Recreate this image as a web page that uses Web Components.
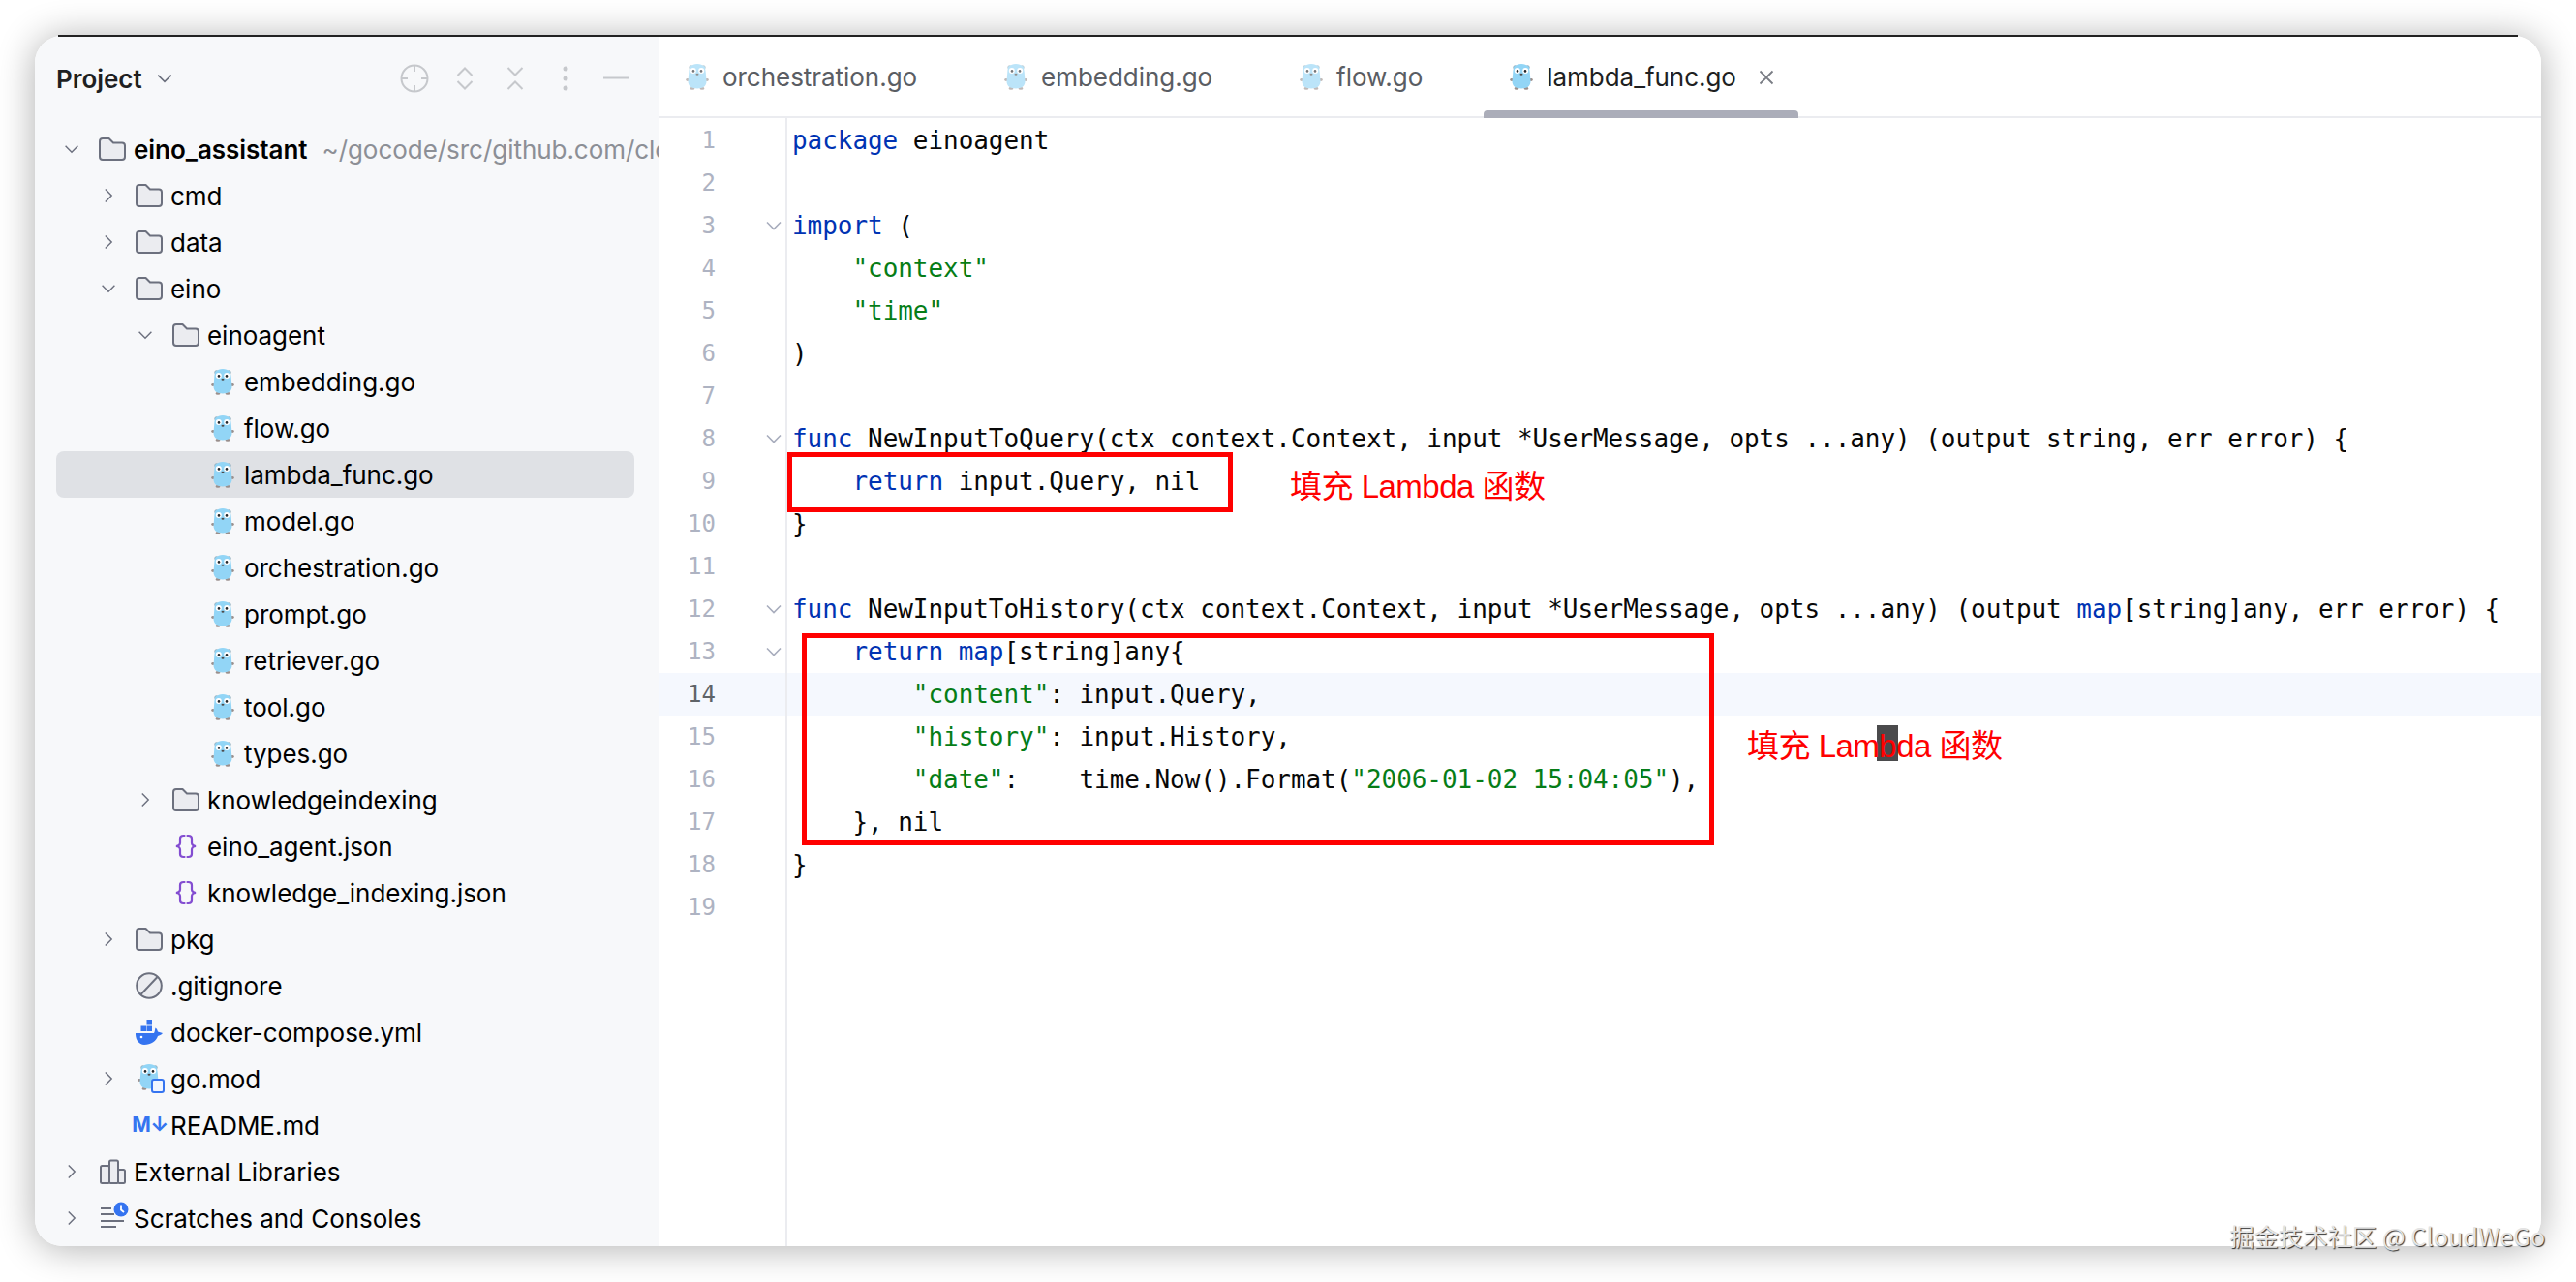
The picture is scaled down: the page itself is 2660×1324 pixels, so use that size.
<!DOCTYPE html>
<html lang="zh">
<head>
<meta charset="utf-8">
<title>lambda_func.go</title>
<style>
  html, body { margin: 0; background: #fff; }
  body { font-family: Inter, "Noto Sans CJK SC", sans-serif; }
</style>
</head>
<body>
<ide-window>
  <project-panel slot="side">
    <tree-row level="0" arrow="open" icon="folder"><b>eino_assistant</b><i>~/gocode/src/github.com/clo</i></tree-row>
    <tree-row level="1" arrow="closed" icon="folder">cmd</tree-row>
    <tree-row level="1" arrow="closed" icon="folder">data</tree-row>
    <tree-row level="1" arrow="open" icon="folder">eino</tree-row>
    <tree-row level="2" arrow="open" icon="folder">einoagent</tree-row>
    <tree-row level="3" icon="go">embedding.go</tree-row>
    <tree-row level="3" icon="go">flow.go</tree-row>
    <tree-row level="3" icon="go" selected>lambda_func.go</tree-row>
    <tree-row level="3" icon="go">model.go</tree-row>
    <tree-row level="3" icon="go">orchestration.go</tree-row>
    <tree-row level="3" icon="go">prompt.go</tree-row>
    <tree-row level="3" icon="go">retriever.go</tree-row>
    <tree-row level="3" icon="go">tool.go</tree-row>
    <tree-row level="3" icon="go">types.go</tree-row>
    <tree-row level="2" arrow="closed" icon="folder">knowledgeindexing</tree-row>
    <tree-row level="2" icon="json">eino_agent.json</tree-row>
    <tree-row level="2" icon="json">knowledge_indexing.json</tree-row>
    <tree-row level="1" arrow="closed" icon="folder">pkg</tree-row>
    <tree-row level="1" icon="git">.gitignore</tree-row>
    <tree-row level="1" icon="docker">docker-compose.yml</tree-row>
    <tree-row level="1" arrow="closed" icon="gomod">go.mod</tree-row>
    <tree-row level="1" icon="md">README.md</tree-row>
    <tree-row level="0" arrow="closed" icon="lib">External Libraries</tree-row>
    <tree-row level="0" arrow="closed" icon="scratch">Scratches and Consoles</tree-row>
  </project-panel>

  <editor-pane slot="main">
    <editor-tab slot="tabs">orchestration.go</editor-tab>
    <editor-tab slot="tabs">embedding.go</editor-tab>
    <editor-tab slot="tabs">flow.go</editor-tab>
    <editor-tab slot="tabs" active>lambda_func.go</editor-tab>

    <code-line n="1"><span class="k">package</span> einoagent</code-line>
    <code-line n="2"></code-line>
    <code-line n="3" fold><span class="k">import</span> (</code-line>
    <code-line n="4">    <span class="s">"context"</span></code-line>
    <code-line n="5">    <span class="s">"time"</span></code-line>
    <code-line n="6">)</code-line>
    <code-line n="7"></code-line>
    <code-line n="8" fold><span class="k">func</span> NewInputToQuery(ctx context.Context, input *UserMessage, opts ...any) (output string, err error) {</code-line>
    <code-line n="9">    <span class="k">return</span> input.Query, nil</code-line>
    <code-line n="10">}</code-line>
    <code-line n="11"></code-line>
    <code-line n="12" fold><span class="k">func</span> NewInputToHistory(ctx context.Context, input *UserMessage, opts ...any) (output <span class="k">map</span>[string]any, err error) {</code-line>
    <code-line n="13" fold>    <span class="k">return</span> <span class="k">map</span>[string]any{</code-line>
    <code-line n="14" current>        <span class="s">"content"</span>: input.Query,</code-line>
    <code-line n="15">        <span class="s">"history"</span>: input.History,</code-line>
    <code-line n="16">        <span class="s">"date"</span>:    time.Now().Format(<span class="s">"2006-01-02 15:04:05"</span>),</code-line>
    <code-line n="17">    }, nil</code-line>
    <code-line n="18">}</code-line>
    <code-line n="19"></code-line>
  </editor-pane>

  <!-- hand drawn notes on top of the screenshot -->
  <red-box x="777" y="430" w="460" h="62"></red-box>
  <red-box x="792" y="617" w="942" h="219"></red-box>
  <red-note x="1296" y="463">填充 Lambda 函数</red-note>
  <text-cursor x="1902" y="712"></text-cursor>
  <red-note x="1768" y="731">填充 Lambda 函数</red-note>
</ide-window>
<water-mark>掘金技术社区 @ CloudWeGo</water-mark>

<script>
const GOPHER = `
  <svg width="24" height="28" viewBox="0 0 24 28">
    <ellipse cx="2" cy="17.5" rx="1.8" ry="1.4" fill="#9a8f8c"/>
    <ellipse cx="22" cy="17.5" rx="1.8" ry="1.4" fill="#9a8f8c"/>
    <ellipse cx="7" cy="26.4" rx="2.4" ry="1.4" fill="#9a8f8c"/>
    <ellipse cx="17" cy="26.4" rx="2.4" ry="1.4" fill="#9a8f8c"/>
    <circle cx="5.600" cy="4.600" r="2" fill="#8ccfef" stroke="#9aa8b0" stroke-width=".6"/>
    <circle cx="18.400" cy="4.600" r="2" fill="#8ccfef" stroke="#9aa8b0" stroke-width=".6"/>
    <path d="M12 1C18.500 1 20.500 4.600 20.700 9.500L21.500 19C21.500 24.200 17.500 26.400 12 26.400S2.500 24.200 2.500 19L3.300 9.500C3.500 4.600 5.500 1 12 1Z" fill="#92d5f6"/>
    <circle cx="7.800" cy="8" r="3" fill="#fff"/>
    <circle cx="16.200" cy="8" r="3" fill="#fff"/>
    <circle cx="8" cy="8.400" r="1.300" fill="#23272b"/>
    <circle cx="16" cy="8.400" r="1.300" fill="#23272b"/>
    <ellipse cx="12" cy="11.800" rx="1.500" ry="1" fill="#4d4a4a"/>
  </svg>`;

const ICONS = {
  go: GOPHER,
  folder: `<svg width="28" height="24" viewBox="0 0 28 24"><path d="M1 4a3 3 0 0 1 3-3h6.500l4.500 4.500h9a3 3 0 0 1 3 3V20a3 3 0 0 1-3 3H4a3 3 0 0 1-3-3Z" fill="#ebecf0" stroke="#6c707e" stroke-width="2" stroke-linejoin="round"/></svg>`,
  json: `<svg width="28" height="26" viewBox="0 0 28 26" fill="none" stroke="#834dd1" stroke-width="2.200" stroke-linecap="round"><path d="M12.500 2H11.500C9 2 8 3 8 5V9.500C8 11.500 7 12.500 4 13C7 13.500 8 14.500 8 16.500V21C8 23 9 24 11.500 24H12.500"/><path d="M15.500 2H16.500C19 2 20 3 20 5V9.500C20 11.500 21 12.500 24 13C21 13.500 20 14.500 20 16.500V21C20 23 19 24 16.500 24H15.500"/></svg>`,
  git: `<svg width="28" height="28" viewBox="0 0 28 28"><circle cx="14" cy="14" r="12.800" fill="#ebecf0" stroke="#6c707e" stroke-width="2"/><path d="M5.500 23L22.500 5" stroke="#6c707e" stroke-width="2"/></svg>`,
  docker: `<svg width="28" height="28" viewBox="0 0 28 28" fill="#3574f0"><rect x="11.500" y="1" width="5.500" height="5.500"/><rect x="5.500" y="7.500" width="5.500" height="5.500"/><rect x="11.500" y="7.500" width="5.500" height="5.500"/><path d="M0 15H19C20 13.500 20 11 20.500 9.500C22 10.500 22.700 12 23 13.500L28 15C26.500 17 24.500 17.500 23 18C21 23.500 16 27 9 27C3 27-.3 21 0 15Z"/><circle cx="6" cy="19" r="1.300" fill="#fff"/></svg>`,
  gomod: `<span style="position:relative;display:block;width:28px;height:28px;left:2px;top:-2px">${GOPHER}<span style="position:absolute;right:0;bottom:-3px;width:10px;height:11px;border:2px solid #3574f0;border-radius:3px;background:#f0f5ff"></span></span>`,
  md: `<span style="position:relative;left:1px;display:block;font:700 21px/28px Inter,sans-serif;color:#3574f0;white-space:nowrap;letter-spacing:-.5px">M↓</span>`,
  lib: `<svg width="28" height="26" viewBox="0 0 28 26" fill="#ebecf0" stroke="#6c707e" stroke-width="2" stroke-linejoin="round"><rect x="2" y="7" width="9" height="18" rx="1.500"/><rect x="11" y="1.500" width="9" height="23.500" rx="1.500"/><rect x="20" y="11" width="7" height="14" rx="1.500"/></svg>`,
  scratch: `<svg width="30" height="28" viewBox="0 0 30 28" stroke="#6c707e" stroke-width="2" style="overflow:visible"><path d="M3 4H14M3 10H17M3 17H27M3 23H19" fill="none"/><circle cx="24" cy="5" r="7.500" fill="#3574f0" stroke="none"/><path d="M24 .5V5.500L27 8" fill="none" stroke="#fff" stroke-width="1.800"/></svg>`
};

class FileIcon extends HTMLElement {
  connectedCallback() {
    const root = this.attachShadow({ mode: 'open' });
    root.innerHTML = `
      <style>
        :host { display: flex; align-items: center; justify-content: center; width: 28px; height: 28px; flex: none; }
        svg { display: block; flex: none; }
      </style>
      ${ICONS[this.getAttribute('type')] || ''}`;
  }
}

class ChevronIcon extends HTMLElement {
  connectedCallback() {
    const dir = this.getAttribute('dir');
    const color = this.getAttribute('color') || '#6c707e';
    const path = dir === 'open' ? 'M2 6L10 14L18 6' : 'M6 2L14 10L6 18';
    this.attachShadow({ mode: 'open' }).innerHTML = `
      <style>
        :host { display: block; width: 20px; height: 20px; flex: none; }
        svg { display: block; }
      </style>
      <svg width="20" height="20" viewBox="0 0 20 20" fill="none" stroke="${color}" stroke-width="1.800"><path d="${path}"/></svg>`;
  }
}

class IdeWindow extends HTMLElement {
  constructor() {
    super();
    this.attachShadow({ mode: 'open' }).innerHTML = `
      <style>
        :host { display: block; padding: 37px 36px; }
        #win {
          position: relative;
          display: flex;
          height: 1250px;
          border-radius: 28px;
          background: #fff;
          box-shadow: 0 2px 38px rgba(0,0,0,0.32);
        }
        #win::before {
          content: '';
          position: absolute;
          top: -1px;
          left: 24px;
          right: 24px;
          height: 2px;
          background: #222;
        }
        #side { display: block; flex: none; width: 645px; overflow: hidden; border-radius: 28px 0 0 28px; }
        #main { display: block; flex: 1; min-width: 0; overflow: hidden; border-radius: 0 28px 28px 0; }
      </style>
      <div id="win">
        <div id="side"><slot name="side"></slot></div>
        <div id="main"><slot name="main"></slot></div>
        <slot></slot>
      </div>`;
  }
}

class ProjectPanel extends HTMLElement {
  constructor() {
    super();
    this.attachShadow({ mode: 'open' }).innerHTML = `
      <style>
        :host {
          display: block;
          box-sizing: border-box;
          height: 1250px;
          background: #f7f8fa;
          border-right: 1px solid #ebecf0;
          font: 26px Inter, sans-serif;
          letter-spacing: -0.04px;
          color: #000;
        }
        header { display: flex; align-items: center; height: 88px; padding: 0 18px 0 22px; }
        h1 { margin: 0; font: 600 26px Inter, sans-serif; color: #1e1f22; }
        chevron-icon { margin-left: 13px; transform: scale(.85); }
        .tools { display: flex; margin-left: auto; }
        .tools svg { display: block; width: 52px; height: 40px; }
        #tree { padding-top: 5px; white-space: nowrap; }
      </style>
      <header>
        <h1>Project</h1>
        <chevron-icon dir="open" color="#6c707e"></chevron-icon>
        <div class="tools">
          <svg viewBox="0 0 52 40" fill="none" stroke="#c6c8cc" stroke-width="2"><circle cx="26" cy="20" r="13.500"/><path d="M26 6.500V13M26 27V33.500M12.500 20H19M33 20H39.500"/></svg>
          <svg viewBox="0 0 52 40" fill="none" stroke="#c6c8cc" stroke-width="2"><path d="M18.500 17L26 9.500L33.500 17M18.500 23L26 30.500L33.500 23"/></svg>
          <svg viewBox="0 0 52 40" fill="none" stroke="#c6c8cc" stroke-width="2"><path d="M18.500 9L26 16.500L33.500 9M18.500 31L26 23.500L33.500 31"/></svg>
          <svg viewBox="0 0 52 40" fill="#c6c8cc"><circle cx="26" cy="10" r="2.500"/><circle cx="26" cy="20" r="2.500"/><circle cx="26" cy="30" r="2.500"/></svg>
          <svg viewBox="0 0 52 40" fill="none" stroke="#c6c8cc" stroke-width="2"><path d="M13 19.500H39"/></svg>
        </div>
      </header>
      <div id="tree"><slot></slot></div>`;
  }
}

class TreeRow extends HTMLElement {
  connectedCallback() {
    const level = Number(this.getAttribute('level'));
    const arrow = this.getAttribute('arrow');
    const icon = this.getAttribute('icon');
    this.attachShadow({ mode: 'open' }).innerHTML = `
      <style>
        :host { display: flex; align-items: center; height: 48px; margin: 0 25px 0 22px; padding-left: ${6 + level * 38}px; border-radius: 8px; }
        :host([selected]) { background: #dfe1e5; }
        #arrow { width: 38px; flex: none; }
        file-icon { margin-right: 8px; }
        chevron-icon { transform: scale(.8); }
        ::slotted(b) { font-weight: 600; }
        ::slotted(i) { font-style: normal; color: #8c8f96; margin-left: 15px; }
      </style>
      <div id="arrow">${arrow ? `<chevron-icon dir="${arrow}"></chevron-icon>` : ''}</div>
      <file-icon type="${icon}"></file-icon>
      <div><slot></slot></div>`;
  }
}

class EditorPane extends HTMLElement {
  constructor() {
    super();
    this.attachShadow({ mode: 'open' }).innerHTML = `
      <style>
        :host { display: flex; flex-direction: column; height: 1250px; background: #fff; }
        #tabs { display: flex; flex: none; height: 82px; margin-top: 1px; border-bottom: 2px solid #ebecf0; }
        #code {
          flex: 1;
          padding-top: 1px;
          background: linear-gradient(#ebecf0, #ebecf0) no-repeat 130px 0 / 2px 100%;
        }
      </style>
      <div id="tabs"><slot name="tabs"></slot></div>
      <div id="code"><slot></slot></div>`;
  }
}

class EditorTab extends HTMLElement {
  constructor() {
    super();
    this.attachShadow({ mode: 'open' }).innerHTML = `
      <style>
        :host {
          position: relative;
          display: flex;
          align-items: center;
          padding: 0 63px 0 25px;
          font: 26px Inter, sans-serif;
          letter-spacing: -0.04px;
          color: #5a5d63;
          white-space: nowrap;
        }
        :host([active]) { color: #1e1f22; padding-right: 64px; }
        file-icon { margin-right: 12px; opacity: .62; }
        :host([active]) file-icon { opacity: 1; }
        #close { display: none; position: absolute; right: 25px; top: 34px; }
        #bar { display: none; position: absolute; left: 0; right: 0; bottom: -2px; height: 8px; border-radius: 4px 4px 0 0; background: #abadb9; }
        :host([active]) #close, :host([active]) #bar { display: block; }
      </style>
      <file-icon type="go"></file-icon>
      <slot></slot>
      <svg id="close" width="16" height="16" viewBox="0 0 16 16" stroke="#7a7d85" stroke-width="1.800"><path d="M1.500 1.500L14.500 14.500M14.500 1.500L1.500 14.500"/></svg>
      <div id="bar"></div>`;
  }
}

class CodeLine extends HTMLElement {
  connectedCallback() {
    const fold = this.hasAttribute('fold');
    this.attachShadow({ mode: 'open' }).innerHTML = `
      <style>
        :host {
          display: flex;
          height: 44px;
          align-items: center;
          font: 26px "DejaVu Sans Mono", monospace;
          letter-spacing: -0.05px;
          color: #080808;
          white-space: pre;
        }
        :host([current]) { background: #f5f8fe; }
        #num {
          width: 58px;
          flex: none;
          text-align: right;
          font-size: 24px;
          letter-spacing: 0;
          color: #aeb3c2;
        }
        :host([current]) #num { color: #5f6368; }
        #fold { display: flex; justify-content: flex-end; width: 74px; height: 44px; flex: none; align-items: center; box-sizing: border-box; padding-right: 4px; border-right: 2px solid #ebecf0; }
        #fold svg { display: block; }
        #text { padding-left: 5px; }
        ::slotted(.k) { color: #0033b3; }
        ::slotted(.s) { color: #067d17; }
      </style>
      <div id="num">${this.getAttribute('n')}</div>
      <div id="fold">${fold ? '<svg width="16" height="10" viewBox="0 0 16 10" fill="none" stroke="#a8adbd" stroke-width="1.600"><path d="M1 1.500L8 8.500L15 1.500"/></svg>' : ''}</div>
      <div id="text"><slot></slot></div>`;
  }
}

class RedBox extends HTMLElement {
  connectedCallback() {
    const a = (k) => this.getAttribute(k);
    this.attachShadow({ mode: 'open' }).innerHTML = `
      <style>
        :host {
          position: absolute;
          left: ${a('x')}px;
          top: ${a('y')}px;
          width: ${a('w')}px;
          height: ${a('h')}px;
          box-sizing: border-box;
          border: 5px solid #f00;
        }
      </style>`;
  }
}

class RedNote extends HTMLElement {
  connectedCallback() {
    this.attachShadow({ mode: 'open' }).innerHTML = `
      <style>
        :host {
          position: absolute;
          left: ${this.getAttribute('x')}px;
          top: ${this.getAttribute('y')}px;
          transform: translateY(-50%);
          font: 33px "Liberation Sans", "Noto Sans CJK SC", sans-serif;
          letter-spacing: -0.5px;
          color: #f00;
          white-space: nowrap;
        }
      </style>
      <slot></slot>`;
  }
}

class TextCursor extends HTMLElement {
  connectedCallback() {
    this.attachShadow({ mode: 'open' }).innerHTML = `
      <style>
        :host {
          position: absolute;
          left: ${this.getAttribute('x')}px;
          top: ${this.getAttribute('y')}px;
          width: 22px;
          height: 37px;
          background: #4a4a4c;
        }
      </style>`;
  }
}

class WaterMark extends HTMLElement {
  constructor() {
    super();
    this.attachShadow({ mode: 'open' }).innerHTML = `
      <style>
        :host {
          position: absolute;
          right: 32px;
          top: 1258px;
          font: 25.300px/36px "Noto Sans CJK SC", "Noto Sans", sans-serif;
          color: #e4e4e4;
          text-shadow: 1px 1px 1px rgba(0,0,0,0.8);
          white-space: nowrap;
        }
      </style>
      <slot></slot>`;
  }
}

customElements.define('file-icon', FileIcon);
customElements.define('chevron-icon', ChevronIcon);
customElements.define('ide-window', IdeWindow);
customElements.define('project-panel', ProjectPanel);
customElements.define('tree-row', TreeRow);
customElements.define('editor-pane', EditorPane);
customElements.define('editor-tab', EditorTab);
customElements.define('code-line', CodeLine);
customElements.define('red-box', RedBox);
customElements.define('red-note', RedNote);
customElements.define('text-cursor', TextCursor);
customElements.define('water-mark', WaterMark);
</script>
</body>
</html>
